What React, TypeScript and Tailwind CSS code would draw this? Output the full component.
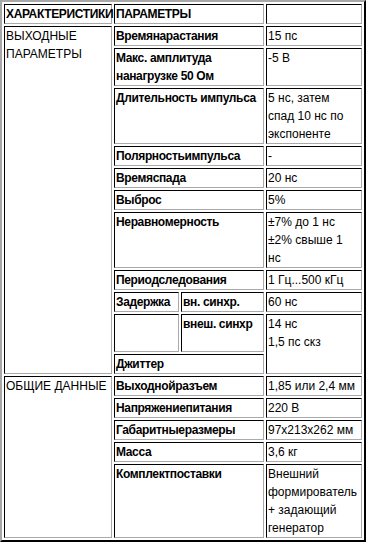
import React from "react";

type CellProps = {
  children?: React.ReactNode;
  bold?: boolean;
  colSpan?: number;
  rowSpan?: number;
  className?: string;
};

function Cell({ children, bold, colSpan, rowSpan, className = "" }: CellProps) {
  return (
    <td
      colSpan={colSpan}
      rowSpan={rowSpan}
      className={`border border-solid border-t-black border-l-black border-r-[#aaaaaa] border-b-[#aaaaaa] align-top px-px py-0 ${
        bold ? "font-bold tracking-[-0.35px]" : "font-normal"
      } ${className}`}
    >
      {children}
    </td>
  );
}

export default function App() {
  return (
    <div className="w-[366px] h-[542px] bg-white overflow-hidden font-['Liberation_Sans',Arial,sans-serif] text-[12px] leading-[18px] text-black">
      <table className="table-fixed w-[366px] border-separate border-spacing-[2px] border-2 border-solid border-t-[#a8a8a8] border-l-[#a8a8a8] border-r-black border-b-black">
        <colgroup>
          <col className="w-[108px]" />
          <col className="w-[65px]" />
          <col className="w-[83px]" />
          <col className="w-[96px]" />
        </colgroup>
        <tbody>
          <tr>
            <Cell bold className="whitespace-nowrap">ХАРАКТЕРИСТИКИ</Cell>
            <Cell bold colSpan={2}>ПАРАМЕТРЫ</Cell>
            <Cell>&nbsp;</Cell>
          </tr>
          <tr>
            <Cell rowSpan={11}>
              ВЫХОДНЫЕ
              <br />
              ПАРАМЕТРЫ
            </Cell>
            <Cell bold colSpan={2}>Времянарастания</Cell>
            <Cell>15 пс</Cell>
          </tr>
          <tr>
            <Cell bold colSpan={2}>
              Макс. амплитуда
              <br />
              нанагрузке 50 Ом
            </Cell>
            <Cell>-5 В</Cell>
          </tr>
          <tr>
            <Cell bold colSpan={2} className="whitespace-nowrap">Длительность импульса</Cell>
            <Cell>
              5 нс, затем
              <br />
              спад 10 нс по
              <br />
              экспоненте
            </Cell>
          </tr>
          <tr>
            <Cell bold colSpan={2}>Полярностьимпульса</Cell>
            <Cell>-</Cell>
          </tr>
          <tr>
            <Cell bold colSpan={2}>Времяспада</Cell>
            <Cell>20 нс</Cell>
          </tr>
          <tr>
            <Cell bold colSpan={2}>Выброс</Cell>
            <Cell>5%</Cell>
          </tr>
          <tr>
            <Cell bold colSpan={2}>Неравномерность</Cell>
            <Cell>
              ±7% до 1 нс
              <br />
              ±2% свыше 1
              <br />
              нс
            </Cell>
          </tr>
          <tr>
            <Cell bold colSpan={2}>Периодследования</Cell>
            <Cell>1 Гц...500 кГц</Cell>
          </tr>
          <tr>
            <Cell bold>Задержка</Cell>
            <Cell bold>вн. синхр.</Cell>
            <Cell>60 нс</Cell>
          </tr>
          <tr className="h-[38px]">
            <Cell>&nbsp;</Cell>
            <Cell bold>внеш. синхр</Cell>
            <Cell rowSpan={2}>
              14 нс
              <br />
              1,5 пс скз
            </Cell>
          </tr>
          <tr>
            <Cell bold colSpan={2}>Джиттер</Cell>
          </tr>
          <tr>
            <Cell rowSpan={5}>ОБЩИЕ ДАННЫЕ</Cell>
            <Cell bold colSpan={2}>Выходнойразъем</Cell>
            <Cell>1,85 или 2,4 мм</Cell>
          </tr>
          <tr>
            <Cell bold colSpan={2}>Напряжениепитания</Cell>
            <Cell>220 В</Cell>
          </tr>
          <tr>
            <Cell bold colSpan={2}>Габаритныеразмеры</Cell>
            <Cell>97x213x262 мм</Cell>
          </tr>
          <tr>
            <Cell bold colSpan={2}>Масса</Cell>
            <Cell>3,6 кг</Cell>
          </tr>
          <tr>
            <Cell bold colSpan={2}>Комплектпоставки</Cell>
            <Cell>
              Внешний
              <br />
              формирователь
              <br />
              + задающий
              <br />
              генератор
            </Cell>
          </tr>
        </tbody>
      </table>
    </div>
  );
}
